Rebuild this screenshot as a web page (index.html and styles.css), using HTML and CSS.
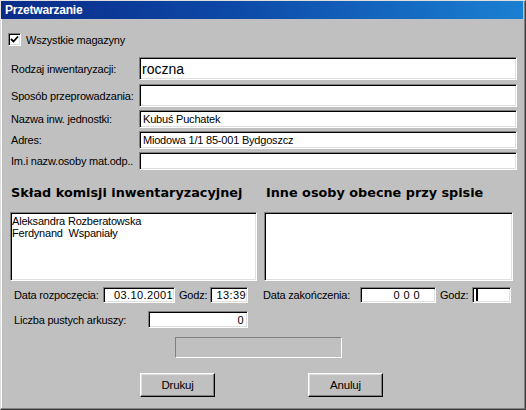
FILE: index.html
```html
<!DOCTYPE html>
<html lang="pl">
<head>
<meta charset="utf-8">
<title>Przetwarzanie</title>
<link rel="stylesheet" href="styles.css">
</head>
<body>
<div class="window">
  <div class="titlebar"><span class="title">Przetwarzanie</span></div>
  <div class="content">
    <div class="check-row">
      <span class="checkbox"><svg width="9" height="9" viewBox="0 0 9 9"><path d="M1 4 L3.5 6.5 L8 1.5" fill="none" stroke="#000" stroke-width="1.8"/></svg></span>
      <span class="check-label">Wszystkie magazyny</span>
    </div>
    <div class="form">
      <span class="lbl">Rodzaj inwentaryzacji:</span><div class="field big">roczna</div>
      <span class="lbl">Sposób przeprowadzania:</span><div class="field big"></div>
      <span class="lbl">Nazwa inw. jednostki:</span><div class="field">Kubuś Puchatek</div>
      <span class="lbl">Adres:</span><div class="field">Miodowa 1/1 85-001 Bydgoszcz</div>
      <span class="lbl">Im.i nazw.osoby mat.odp..</span><div class="field"></div>
    </div>
    <div class="columns">
      <div class="col">
        <div class="heading left-h">Skład komisji inwentaryzacyjnej</div>
        <div class="list">Aleksandra Rozberatowska<br>Ferdynand&nbsp; Wspaniały</div>
        <div class="date-row">
          <span class="dlabel l1">Data rozpoczęcia:</span>
          <div class="field small num w72">03.10.2001</div>
          <span class="godz g1">Godz:</span>
          <div class="field small num w38">13:39</div>
        </div>
        <div class="count-row">
          <span class="dlabel l3">Liczba pustych arkuszy:</span>
          <div class="field count num">0</div>
        </div>
      </div>
      <div class="col">
        <div class="heading right-h">Inne osoby obecne przy spisie</div>
        <div class="list"></div>
        <div class="date-row">
          <span class="dlabel l2">Data zakończenia:</span>
          <div class="field small num w76 empty-date">0 0 0</div>
          <span class="godz g2">Godz:</span>
          <div class="field small w39"><span class="caret"></span></div>
        </div>
      </div>
    </div>
    <div class="progress"></div>
    <div class="buttons">
      <div class="btn">Drukuj</div>
      <div class="btn">Anuluj</div>
    </div>
  </div>
</div>
</body>
</html>
```
FILE: styles.css
```css
html, body {
  margin: 0;
  padding: 0;
  background: #c0c0c0;
}
body {
  font-family: "Liberation Sans", Arial, sans-serif;
  font-size: 11px;
  letter-spacing: -0.2px;
  color: #000;
}
.window {
  width: 526px;
  height: 410px;
  box-sizing: border-box;
  background: #c0c0c0;
  border-top: 1px solid #dfdfdf;
  border-left: 1px solid #dfdfdf;
  border-right: 1px solid #404040;
  border-bottom: 1px solid #404040;
  box-shadow: inset -1px -1px #808080, inset 1px 0 #ffffff;
  overflow: hidden;
}
.titlebar {
  height: 18px;
  margin-right: 2px;
  background: linear-gradient(to right, #0a2a88 0%, #0d4aa8 45%, #1a80d2 100%);
  display: flex;
  align-items: center;
}
.title {
  padding-left: 4px;
  color: #fff;
  font-weight: bold;
  font-size: 12px;
  letter-spacing: -0.2px;
}
.check-row {
  margin-top: 14px;
  margin-left: 7px;
  height: 13px;
  display: flex;
  align-items: center;
}
.checkbox {
  width: 13px;
  height: 13px;
  box-sizing: border-box;
  background: #fff;
  border: 1px solid;
  border-color: #808080 #fff #fff #808080;
  box-shadow: inset 1px 1px #000, inset -1px -1px #dfdfdf;
  display: flex;
  align-items: center;
  justify-content: center;
}
.checkbox svg { display: block; }
.check-label {
  margin-left: 5px;
}
.field {
  box-sizing: border-box;
  background: #fff;
  border: 1px solid;
  border-color: #808080 #fff #fff #808080;
  box-shadow: inset 1px 1px #000, inset -1px -1px #dfdfdf;
  padding: 0 3px;
  display: flex;
  align-items: center;
  white-space: nowrap;
  overflow: hidden;
}
.form {
  margin-top: 11px;
  padding-left: 10px;
  display: grid;
  grid-template-columns: 128px 378px;
  grid-template-rows: 24px 23px 18px 18px 18px;
  row-gap: 3px;
}
.form .lbl {
  align-self: center;
  white-space: nowrap;
}
.form .lbl:first-child { margin-top: -1px; }
.form .field { height: 100%; }
.form .field.big {
  height: 23px;
  align-self: start;
  font-size: 14px;
  letter-spacing: 0;
  padding-left: 2px;
}
.columns {
  margin-top: 16px;
  padding-left: 9px;
  display: grid;
  grid-template-columns: 247px 249px;
  column-gap: 7px;
}
.heading {
  font-family: "DejaVu Sans", Verdana, sans-serif;
  font-weight: bold;
  font-size: 12.8px;
  letter-spacing: 0;
  line-height: 14px;
  height: 14px;
  white-space: nowrap;
}
.left-h { padding-left: 1px; }
.right-h { padding-left: 2px; }
.list {
  margin-top: 12px;
  height: 69px;
  box-sizing: border-box;
  background: #fff;
  border: 1px solid;
  border-color: #808080 #fff #fff #808080;
  box-shadow: inset 1px 1px #000, inset -1px -1px #dfdfdf;
  padding: 2px 1px 0 1px;
  line-height: 12px;
}
.date-row {
  margin-top: 6px;
  height: 16px;
  display: flex;
  align-items: center;
}
.dlabel, .godz {
  white-space: nowrap;
  box-sizing: border-box;
}
.l1 { width: 93px; padding-left: 4px; }
.l2 { width: 97px; margin-left: -1px; }
.l3 { width: 138px; padding-left: 4px; }
.godz { margin-left: 4px; }
.g1 { width: 31px; }
.g2 { width: 32px; }
.field.small { height: 16px; }
.num {
  justify-content: flex-end;
  padding-right: 1px;
  letter-spacing: 0.4px;
}
.w72 { width: 72px; }
.w38 { width: 38px; }
.w76 { width: 76px; }
.w39 { width: 39px; padding-left: 3px; }
.empty-date { padding-right: 15px; }
.caret {
  display: block;
  width: 2px;
  height: 12px;
  background: #000;
}
.count-row {
  margin-top: 8px;
  height: 17px;
  display: flex;
  align-items: center;
}
.field.count {
  width: 100px;
  height: 17px;
  padding-right: 3px;
}
.progress {
  margin-top: 9px;
  margin-left: 174px;
  width: 167px;
  height: 21px;
  box-sizing: border-box;
  border: 1px solid;
  border-color: #808080 #fff #fff #808080;
  background: #c0c0c0;
}
.buttons {
  margin-top: 15px;
  margin-left: 139px;
  display: flex;
  column-gap: 93px;
}
.btn {
  width: 75px;
  height: 24px;
  box-sizing: border-box;
  border: 1px solid;
  border-color: #fff #000 #000 #fff;
  box-shadow: inset -1px -1px #808080, inset 1px 1px #dfdfdf;
  display: flex;
  align-items: center;
  justify-content: center;
  font-size: 11.5px;
}
```
